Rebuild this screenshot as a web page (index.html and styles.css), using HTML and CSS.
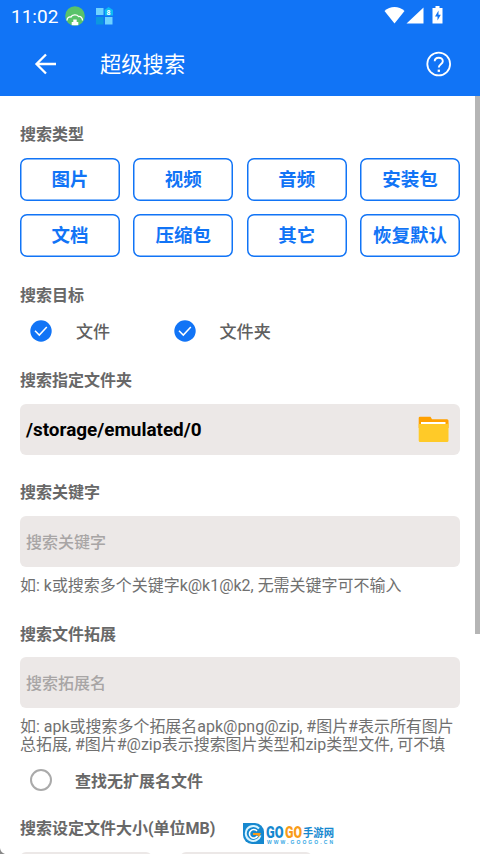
FILE: index.html
```html
<!DOCTYPE html>
<html lang="zh-CN">
<head>
<meta charset="utf-8">
<title>超级搜索</title>
<link rel="stylesheet" href="styles.css">
</head>
<body>
<div class="screen">
  <header class="top">
    <div class="status">
      <span class="clock">11:02</span>
      <svg class="s-cloud" width="20" height="20" viewBox="0 0 20 20"><circle cx="10" cy="10" r="9.800" fill="#59c36a"/><path d="M2 14.500c0-3 2-4 4-3.500 1-2.500 6-3 7.500-.5 2.500-.3 4 1.500 4 4" fill="none" stroke="#fff" stroke-width="1.300"/><path d="M8.300 13.500h3.400V16h1.600v3.200h-6.600V16h1.600z" fill="#fff"/></svg>
      <svg class="s-apps" width="19" height="18" viewBox="0 0 19 18"><path d="M1 1h7.500v7H1zM10 10h7.500v7.500H10z" fill="#6fd3ff"/><path d="M1 10h7.500v7.500H1z" fill="#0c97df"/><path d="M9.500 3 13.500 0l4.500 3v5.500H10z" fill="#0cbcf2"/><text x="11.500" y="7.800" class="eight">8</text></svg>
      <svg class="s-right" width="62" height="20" viewBox="0 0 62 20"><path d="M.5 5C6-.2 15-.2 20.500 5l-10 12.500z" fill="#fff"/><path d="M39.500 1.500v16H22.500z" fill="#fff"/><path d="M48.500 2h3V0h4v2h3v15.500h-10z" fill="#fff"/><path d="M54.500 4.500 51 10.500h2.500v4l3.300-5.700h-2.300z" fill="#1174f6"/></svg>
    </div>
    <div class="bar">
      <svg class="back" width="22" height="22" viewBox="0 0 22 22"><path d="M22 11H2.500M12 1.500 2.500 11l9.500 9.500" fill="none" stroke="#fff" stroke-width="2.300"/></svg>
      <h1>超级搜索</h1>
      <svg class="help" width="26" height="26" viewBox="0 0 26 26" fill="none" stroke="#fff"><circle cx="12.700" cy="13" r="11.400" stroke-width="1.800"/><path d="M8.700 10.300C8.700 5.500 16.800 5.500 16.800 10.300c0 2.900-4 3.200-4 6.300" stroke-width="1.900"/><path d="M12.800 18.600v2.300" stroke-width="2.300"/></svg>
    </div>
  </header>
  <main>
    <h2>搜索类型</h2>
    <div class="types">
      <button>图片</button><button>视频</button><button>音频</button><button>安装包</button>
      <button>文档</button><button>压缩包</button><button>其它</button><button>恢复默认</button>
    </div>
    <h2 class="target">搜索目标</h2>
    <div class="checks">
      <div class="check"><svg width="22" height="22" viewBox="0 0 22 22"><circle cx="11" cy="11" r="10.700" fill="#1174f6"/><path d="m5 10.800 4.300 4.300 7.500-8" fill="none" stroke="#fff" stroke-width="1.500"/></svg><span>文件</span></div>
      <div class="check"><svg width="22" height="22" viewBox="0 0 22 22"><circle cx="11" cy="11" r="10.700" fill="#1174f6"/><path d="m5 10.800 4.300 4.300 7.500-8" fill="none" stroke="#fff" stroke-width="1.500"/></svg><span>文件夹</span></div>
    </div>
    <h2 class="folder">搜索指定文件夹</h2>
    <div class="field path"><span>/storage/emulated/0</span>
      <svg width="31" height="27" viewBox="0 0 31 27"><path d="M.7 2Q.7.700 2 .7h10.500l1.500 2.600h15q1.500 0 1.500 1.500V12H.7z" fill="#ffa000"/><path d="M3 6h24.500v5H3z" fill="#fff"/><path d="M.7 8h28.600l1.200-1.200V24.500q0 1.500-1.500 1.500H2Q.7 26 .7 24.500z" fill="#ffca28"/></svg>
    </div>
    <h2 class="keyword">搜索关键字</h2>
    <div class="field hint">搜索关键字</div>
    <p>如: k或搜索多个关键字k@k1@k2, 无需关键字可不输入</p>
    <h2 class="ext">搜索文件拓展</h2>
    <div class="field hint">搜索拓展名</div>
    <p>如: apk或搜索多个拓展名apk@png@zip, #图片#表示所有图片<br>总拓展, #图片#@zip表示搜索图片类型和zip类型文件, 可不填</p>
    <div class="check noext"><i class="ring"></i><span>查找无扩展名文件</span></div>
    <h2 class="size">搜索设定文件大小(单位MB)</h2>
    <div class="sizes"><div></div><div></div></div>
  </main>
  <div class="scroll"></div>
  <svg class="corner" width="6" height="6" viewBox="0 0 6 6"><path d="M0 0q.5 4.500 5 6H0z" fill="#888"/></svg>
  <svg class="mark" width="100" height="26" viewBox="0 0 100 26">
    <path d="M0 1h12a9 9 0 0 1 9 9v12H9a9 9 0 0 1-9-9z" fill="#1688cf"/><path d="M16 6.500a7.500 7.500 0 1 0 1.500 7" fill="none" stroke="#d8f4ff" stroke-width="2"/><path d="M14 9a4.300 4.300 0 1 0 .5 5" fill="none" stroke="#fff" stroke-width="1.600"/><path d="M10 11h8l-2 4-2-2h-4z" fill="#f99b18"/>
    <text class="go" x="23" y="15.500" textLength="17.500" lengthAdjust="spacingAndGlyphs">GO</text>
    <text class="go orange" x="42" y="15.500" textLength="17" lengthAdjust="spacingAndGlyphs">GO</text>
    <text class="cn" x="60" y="14.500" textLength="31" lengthAdjust="spacingAndGlyphs">手游网</text>
    <text class="url" x="24" y="22" textLength="66">WWW.GOOGO.CN</text>
  </svg>
</div>
</body>
</html>
```
FILE: styles.css
```css
* { box-sizing: border-box; }
body { margin: 0; font-family: Roboto, "Noto Sans CJK SC", sans-serif; background: #fff; }
.screen { position: relative; width: 480px; height: 854px; overflow: hidden; }
.top { height: 96px; background: #1174f6; color: #fff; }
.status { height: 32px; display: flex; align-items: center; padding-left: 11px; }
.clock { width: 54px; padding-top: 2px; font-size: 19px; line-height: 32px; white-space: nowrap; }
.s-apps { margin-left: 10px; }
.eight { font: bold 7px Roboto, sans-serif; fill: #fff; }
.s-right { margin-left: auto; margin-right: 34px; }
.bar { height: 64px; display: flex; align-items: center; padding: 0 28px 0 34px; }
h1 { margin: 2px 0 0 44px; font-size: 21.300px; font-weight: 400; line-height: 62px; }
.help { margin-left: auto; }
main { padding: 27px 20px 0; }
h2 { margin: 0; height: 24px; line-height: 24px; font-size: 16px; font-weight: 700; color: #686868; white-space: nowrap; }
.types { margin-top: 11px; display: grid; grid-template-columns: repeat(4, 100px); justify-content: space-between; row-gap: 13px; }
button { height: 43px; padding: 2px 0 0; border: 0; border-radius: 7px; box-shadow: inset 0 0 0 1.500px #1174f6; background: #fff; color: #1174f6; font: 700 18.500px/41px Roboto, "Noto Sans CJK SC", sans-serif; white-space: nowrap; }
.target { margin-top: 27px; }
.checks { display: flex; height: 45px; }
.check { display: flex; align-items: center; padding-left: 10px; width: 143.500px; font-size: 17.100px; font-weight: 500; color: #606060; white-space: nowrap; }
.check span { margin-left: 24px; }
.folder { margin-top: 16px; }
.field { margin-top: 11px; height: 51px; padding: 0 6px; line-height: 51px; border-radius: 6px; background: #ece8e7; color: #a8a5a5; font-size: 16px; font-weight: 500; }
.hint { line-height: 53px; }
.path { display: flex; align-items: center; justify-content: space-between; padding-right: 11px; color: #000; font-size: 18.900px; font-weight: 700; }
.keyword { margin-top: 26px; }
p { margin: 10px 0 0; font-size: 15.970px; line-height: 18.700px; color: #707070; white-space: nowrap; }
.ext { margin-top: 27px; }
.hint { margin-top: 11px; }
.ext + .hint { margin-top: 10px; }
.noext { height: 32px; margin-top: 9px; width: auto; font-size: 16px; font-weight: 700; color: #686868; }
.noext span { margin-left: 23px; }
.ring { width: 22px; height: 22px; border: 2px solid #aaa; border-radius: 50%; }
.size { margin-top: 21px; }
.sizes { margin-top: 11px; display: flex; gap: 28px; }
.sizes div { width: 132px; height: 51px; border-radius: 6px; background: #ece8e7; }
.scroll { position: absolute; right: 0; top: 96px; width: 5px; height: 538px; background: #b5b5b5; }
.corner { position: absolute; left: 0; bottom: 0; }
.mark { position: absolute; left: 243px; top: 822px; }
.go { font: 900 16px Roboto, sans-serif; fill: #1688cf; }
.orange { fill: #f99b18; }
.cn { font: 700 11.500px "Noto Sans CJK SC", sans-serif; fill: #1688cf; }
.url { font: bold 5px "Liberation Sans", sans-serif; fill: #35a8e4; }
```
